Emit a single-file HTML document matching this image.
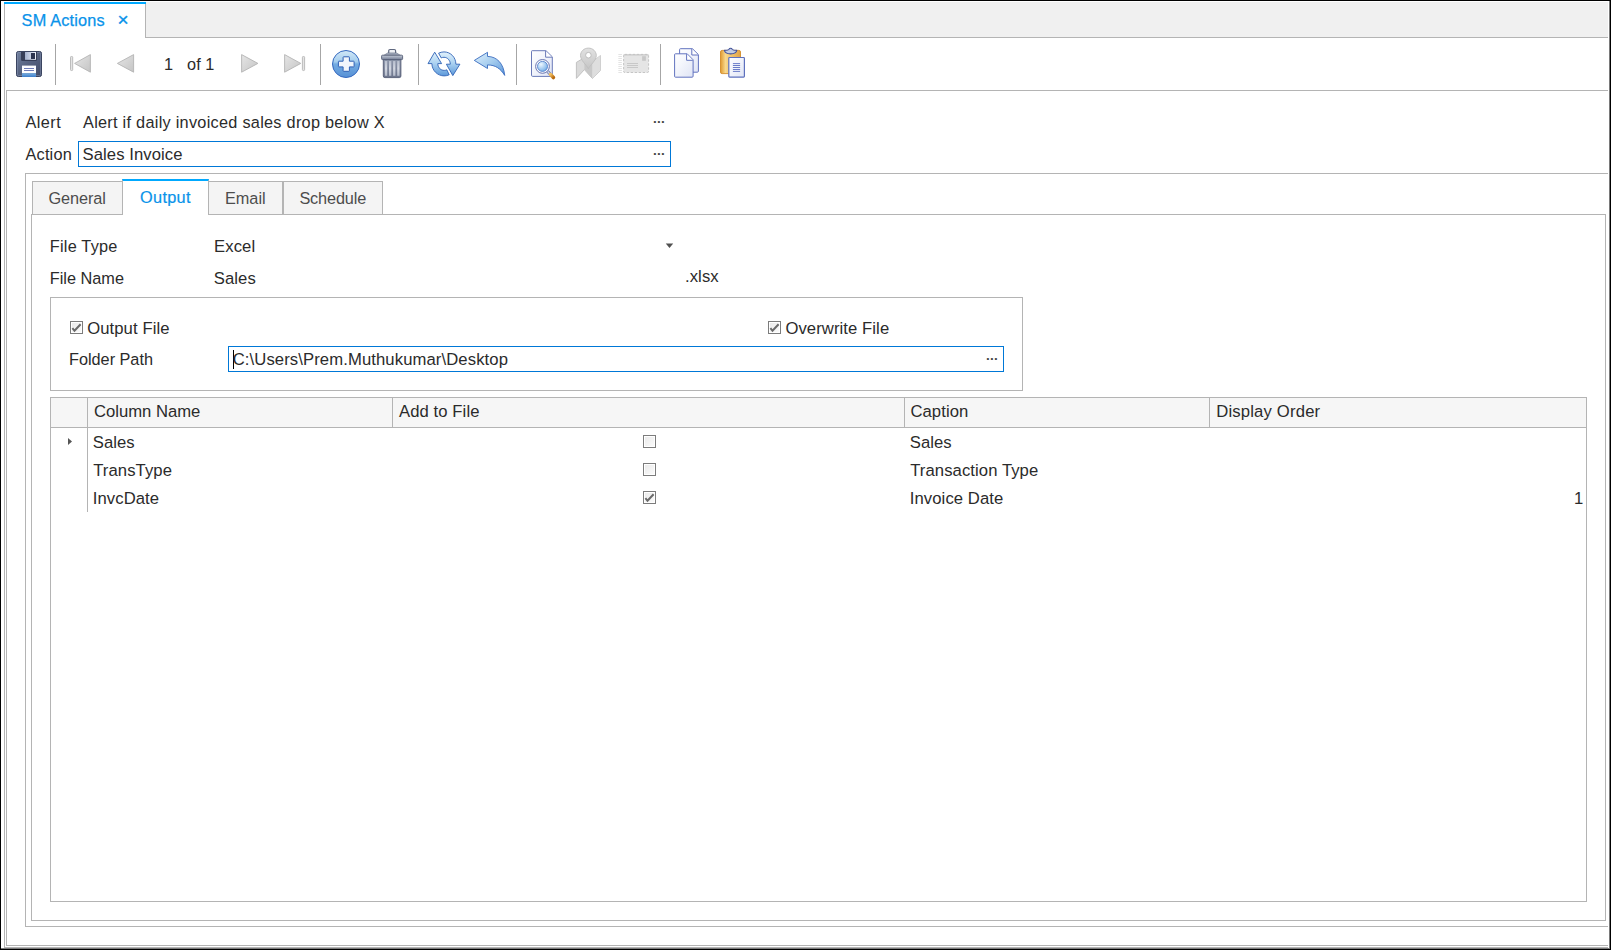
<!DOCTYPE html>
<html lang="en">
<head>
<meta charset="utf-8">
<title>SM Actions</title>
<style>
html,body{margin:0;padding:0;}
body{width:1611px;height:950px;overflow:hidden;background:#fff;position:relative;font-family:"Liberation Sans",sans-serif;font-size:16.67px;color:#2b2b2b;}
.abs{position:absolute;box-sizing:border-box;}
.t{position:absolute;white-space:nowrap;line-height:20px;height:20px;letter-spacing:0.08px;}
.g{border:1px solid #b4b4b4;}
.sep{position:absolute;width:1px;top:44px;height:41px;background:#a6a6a6;}
.ico{position:absolute;overflow:visible;}
.cb{position:absolute;width:13px;height:13px;box-sizing:border-box;border:1px solid #7c7c7c;background:linear-gradient(135deg,#e9e9e9,#fcfcfc);box-shadow:inset 0 0 0 1px #fff;}
.cb svg{position:absolute;left:0;top:0;}
.s{font-size:16.3px;}
</style>
</head>
<body>
<!-- window frame -->
<div class="abs" style="left:0;top:0;width:1611px;height:950px;border:1px solid #000;"></div>
<div class="abs" style="left:1609px;top:1px;width:1px;height:948px;background:#7a7a7a;"></div>
<div class="abs" style="left:1px;top:948px;width:1609px;height:1px;background:#7a7a7a;"></div>

<!-- document tab strip -->
<div class="abs" style="left:4px;top:2px;width:1604px;height:35px;background:#f0f0f0;"></div>
<div class="abs" style="left:145px;top:37px;width:1463px;height:1px;background:#b4b4b4;"></div>
<div class="abs" id="doctab" style="left:4px;top:2px;width:142px;height:36px;background:#fff;border-left:1px solid #b4b4b4;border-right:1px solid #b4b4b4;"></div>
<div class="abs" style="left:4px;top:2px;width:142px;height:2px;background:#00a9ff;"></div>
<div class="t s" id="t_sm" style="left:21.6px;top:10px;color:#0a93ea;letter-spacing:0.19px;-webkit-text-stroke:0.25px #0a93ea;">SM Actions</div>
<div class="t" id="t_x" style="left:117.6px;top:10px;color:#0a93ea;font-size:19px;-webkit-text-stroke:0.35px #0a93ea;">×</div>

<!-- document frame (box A) -->
<div class="abs" style="left:4px;top:37px;width:1px;height:911px;background:#b4b4b4;"></div>
<div class="abs" style="left:4px;top:947px;width:1604px;height:1px;background:#b4b4b4;"></div>

<!-- toolbar -->
<div class="sep" style="left:55px;"></div>
<div class="sep" style="left:320px;"></div>
<div class="sep" style="left:418px;"></div>
<div class="sep" style="left:516px;"></div>
<div class="sep" style="left:660px;"></div>
<div class="t s" id="t_pg1" style="left:164px;top:54px;">1</div>
<div class="t s" id="t_pg2" style="left:187px;top:54px;">of 1</div>

<!-- toolbar icons -->
<svg class="abs" style="left:0;top:0;" width="800" height="90" viewBox="0 0 800 90">
<defs>
<linearGradient id="gSave" x1="0" y1="0" x2="1" y2="1"><stop offset="0" stop-color="#72819f"/><stop offset="0.5" stop-color="#56627f"/><stop offset="1" stop-color="#434c68"/></linearGradient>
<linearGradient id="gMetal" x1="0" y1="0" x2="1" y2="0"><stop offset="0" stop-color="#a3b0cd"/><stop offset="1" stop-color="#eef2fa"/></linearGradient>
<linearGradient id="gBand" x1="0" y1="0" x2="0" y2="1"><stop offset="0" stop-color="#78b0e4"/><stop offset="1" stop-color="#3c7cc8"/></linearGradient>
<linearGradient id="gTri" x1="0" y1="0" x2="1" y2="1"><stop offset="0" stop-color="#e6e6e6"/><stop offset="1" stop-color="#c4c4c4"/></linearGradient>
<linearGradient id="gAdd" x1="0" y1="0" x2="0" y2="1"><stop offset="0" stop-color="#d2e8f7"/><stop offset="0.42" stop-color="#a4cdee"/><stop offset="0.5" stop-color="#74abe1"/><stop offset="1" stop-color="#5690d5"/></linearGradient>
<linearGradient id="gBlue" x1="0" y1="0" x2="0" y2="1"><stop offset="0" stop-color="#e2f2fc"/><stop offset="0.5" stop-color="#a8d0f0"/><stop offset="1" stop-color="#5c98da"/></linearGradient>
<linearGradient id="gBlue2" x1="0" y1="0" x2="1" y2="1"><stop offset="0" stop-color="#dff0fc"/><stop offset="0.5" stop-color="#a4ccee"/><stop offset="1" stop-color="#5a96da"/></linearGradient>
<linearGradient id="gLid" x1="0" y1="0" x2="0" y2="1"><stop offset="0" stop-color="#c4cbd8"/><stop offset="1" stop-color="#757e96"/></linearGradient>
<linearGradient id="gStripe" x1="0" y1="0" x2="0" y2="1"><stop offset="0" stop-color="#b9c0cf"/><stop offset="0.5" stop-color="#d2d7e1"/><stop offset="1" stop-color="#b4bbca"/></linearGradient>
<linearGradient id="gCan" x1="0" y1="0" x2="0" y2="1"><stop offset="0" stop-color="#8e97ab"/><stop offset="1" stop-color="#6c758c"/></linearGradient>
<linearGradient id="gPage" x1="0" y1="0" x2="1" y2="1"><stop offset="0" stop-color="#ffffff"/><stop offset="0.4" stop-color="#f4f6fc"/><stop offset="1" stop-color="#dfe4f5"/></linearGradient>
<radialGradient id="gLens" cx="0.35" cy="0.3" r="0.8"><stop offset="0" stop-color="#eef8ff"/><stop offset="1" stop-color="#6eaae6"/></radialGradient>
<linearGradient id="gGold" x1="0" y1="0" x2="1" y2="1"><stop offset="0" stop-color="#f2c060"/><stop offset="1" stop-color="#b86a10"/></linearGradient>
<linearGradient id="gClipb" x1="0" y1="0" x2="1" y2="0"><stop offset="0" stop-color="#e09a30"/><stop offset="0.25" stop-color="#f8d88c"/><stop offset="1" stop-color="#e2a444"/></linearGradient>
<linearGradient id="gPin" x1="0" y1="0" x2="0" y2="1"><stop offset="0" stop-color="#e2e2e2"/><stop offset="1" stop-color="#c6c6c6"/></linearGradient>
</defs>

<!-- save -->
<g>
<rect x="16.5" y="51.5" width="25" height="25" rx="1.8" fill="url(#gSave)" stroke="#3a4460" stroke-width="1"/>
<rect x="17.5" y="52.5" width="23" height="23" rx="1" fill="none" stroke="#8c9ab8" stroke-opacity="0.45" stroke-width="1"/>
<path d="M21 52 H37 V59.5 Q37 61 35.5 61 H22.5 Q21 61 21 59.5 Z" fill="#363e57"/>
<rect x="25" y="52" width="11" height="7.8" fill="url(#gMetal)"/>
<rect x="31" y="53" width="4" height="6" fill="#2c3450"/>
<rect x="22" y="65.6" width="14" height="7.6" fill="#fdfdff"/>
<rect x="22" y="73.2" width="14" height="3.8" fill="url(#gBand)"/>
<rect x="24" y="68" width="10" height="1" fill="#6f7cb8"/>
<rect x="24" y="70" width="10" height="1" fill="#6f7cb8"/>
</g>

<!-- nav first -->
<rect x="70.5" y="56.5" width="2.2" height="14" rx="0.8" fill="#e4e4e4" stroke="#b6b6b6" stroke-width="0.9"/>
<path d="M74.6 63.4 L90.4 54.6 L90.4 72.2 Z" fill="url(#gTri)" stroke="#b4b4b4" stroke-width="0.9" stroke-linejoin="round"/>
<!-- nav prev -->
<path d="M117.4 63.4 L133.6 54.6 L133.6 72.2 Z" fill="url(#gTri)" stroke="#b4b4b4" stroke-width="0.9" stroke-linejoin="round"/>
<!-- nav next -->
<path d="M257.9 63.4 L241.6 54.6 L241.6 72.2 Z" fill="url(#gTri)" stroke="#b4b4b4" stroke-width="0.9" stroke-linejoin="round"/>
<!-- nav last -->
<path d="M300.8 63.4 L284.6 54.6 L284.6 72.2 Z" fill="url(#gTri)" stroke="#b4b4b4" stroke-width="0.9" stroke-linejoin="round"/>
<rect x="302.4" y="56.5" width="2.2" height="14" rx="0.8" fill="#e4e4e4" stroke="#b6b6b6" stroke-width="0.9"/>

<!-- add -->
<circle cx="346" cy="64" r="13.5" fill="url(#gAdd)" stroke="#3468bf" stroke-width="1"/>
<path d="M343.6 56.8 H348.9 Q349.4 56.8 349.4 57.3 V61.2 H353.6 Q354.1 61.2 354.1 61.7 V66.4 Q354.1 66.9 353.6 66.9 H349.4 V70.8 Q349.4 71.3 348.9 71.3 H343.6 Q343.1 71.3 343.1 70.8 V66.9 H338.9 Q338.4 66.9 338.4 66.4 V61.7 Q338.4 61.2 338.9 61.2 H343.1 V57.3 Q343.1 56.8 343.6 56.8 Z" fill="#f1f5fc" stroke="#2f60b4" stroke-width="1" stroke-linejoin="round"/>

<!-- trash -->
<g>
<rect x="388.7" y="49.5" width="6.9" height="4.6" rx="1.3" fill="#eef0f4" stroke="#5f687f" stroke-width="1.2"/>
<path d="M383.8 55.4 L387.6 52.9 H396.6 L400.4 55.4 Z" fill="#a3abbc" stroke="#6a738a" stroke-width="0.6"/>
<rect x="381.6" y="55.2" width="21" height="4.4" rx="0.9" fill="url(#gLid)" stroke="#525b74" stroke-width="0.9"/>
<path d="M383.3 59.6 H400.9 V76 Q400.9 77.6 399.3 77.6 H384.9 Q383.3 77.6 383.3 76 Z" fill="url(#gCan)" stroke="#525b74" stroke-width="0.9"/>
<g fill="url(#gStripe)"><rect x="384.9" y="61" width="2.3" height="14.8"/><rect x="389" y="61" width="2.3" height="14.8"/><rect x="393.1" y="61" width="2.3" height="14.8"/><rect x="397.2" y="61" width="2.3" height="14.8"/></g>
</g>

<!-- refresh -->
<g stroke="#2f62b6" stroke-width="0.9" stroke-linejoin="round">
<path d="M434.7 52.2 L428 63.6 H431.9 C432 70.5 437.5 75.9 444.2 75.9 C446 75.9 447.7 75.5 449.2 74.8 L446.8 69.8 C446 70.2 445.1 70.4 444.2 70.4 C440.6 70.4 437.8 67.4 437.8 63.6 H441.6 Z" fill="url(#gBlue)"/>
<path d="M452.8 75.6 L459.9 64.2 H455.9 C455.8 57.3 450.6 51.9 444 51.9 C442 51.9 440.2 52.4 438.6 53.2 L441.2 57.9 C442 57.5 443 57.3 444 57.3 C447.5 57.3 450.2 60.3 450.3 64.2 H446.4 Z" fill="url(#gBlue)"/>
</g>

<!-- undo -->
<path d="M474.3 60.4 L487.5 52.3 V56.4 C497 56.6 503.6 63.5 504.7 75.4 C500.5 68.5 495.5 65 487.5 64.9 V68.5 Z" fill="url(#gBlue2)" stroke="#3a6cc0" stroke-width="0.9" stroke-linejoin="round"/>

<!-- search doc -->
<g>
<path d="M532.2 50.7 H546 L552.3 56.8 V75.2 Q552.3 76.4 551.1 76.4 H532.7 Q531.5 76.4 531.5 75.2 V51.4 Q531.5 50.7 532.2 50.7 Z" fill="url(#gPage)" stroke="#6a7ab8" stroke-width="1"/>
<path d="M545.6 51 V57.2 H552" fill="#fff" stroke="#6a7ab8" stroke-width="1"/>
<path d="M547.6 71.4 L552 76" stroke="#6a77a8" stroke-width="3" stroke-linecap="butt"/><path d="M547.6 71.4 L552 76" stroke="#d4d9ea" stroke-width="1.4" stroke-linecap="butt"/>
<path d="M550.6 74.6 L553.4 77.5" stroke="url(#gGold)" stroke-width="3.6" stroke-linecap="round"/>
<circle cx="542.5" cy="66.4" r="6.9" fill="#f6f8fd" stroke="#5c69a8" stroke-width="0.9"/>
<circle cx="542.5" cy="66.4" r="5" fill="url(#gLens)" stroke="#4a78c8" stroke-width="0.8"/>
</g>

<!-- map (disabled) -->
<g>
<path d="M576.4 62.4 L584.4 57.6 L592.4 62 L600.4 55.6 V70.6 L592.4 78.4 L584.4 69.6 L576.4 78.4 Z" fill="#dadada" stroke="#bcbcbc" stroke-width="0.9" stroke-linejoin="round"/>
<path d="M584.4 57.6 L592.4 62 V78.4 L584.4 69.6 Z" fill="#c8c8c8"/>
<path d="M592.4 62 L600.4 55.6 V70.6 L592.4 78.4 Z" fill="#dedede"/>
<path d="M588.4 68.6 C586.4 64.8 580.5 60.4 580.5 55.6 C580.5 51.4 584 48.1 588.4 48.1 C592.8 48.1 596.3 51.4 596.3 55.6 C596.3 60.4 590.4 64.8 588.4 68.6 Z" fill="url(#gPin)" stroke="#bebebe" stroke-width="0.9"/>
<circle cx="588.4" cy="55.2" r="2.8" fill="#fff" stroke="#b8b8b8" stroke-width="0.9"/>
</g>

<!-- mail (disabled) -->
<g>
<g fill="#dedede">
<rect x="618.3" y="54.2" width="3.6" height="0.8"/><rect x="618.3" y="56.2" width="3.6" height="0.8"/><rect x="618.3" y="58.2" width="3.6" height="0.8"/><rect x="618.3" y="60.2" width="3.6" height="0.8"/><rect x="618.3" y="62.2" width="3.6" height="0.8"/><rect x="618.3" y="64.2" width="3.6" height="0.8"/><rect x="618.3" y="66.2" width="3.6" height="0.8"/><rect x="618.3" y="68.2" width="3.6" height="0.8"/><rect x="618.3" y="70.2" width="3.6" height="0.8"/><rect x="618.3" y="72.2" width="3.6" height="0.8"/>
</g>
<rect x="623.6" y="54.4" width="25" height="18.1" rx="1.2" fill="#e5e5e5" stroke="#c0c0c0" stroke-width="0.9" stroke-dasharray="2.4 1.6"/>
<rect x="623.6" y="54.4" width="25" height="1" fill="#c4c4c4"/>
<rect x="642.1" y="56.2" width="3.8" height="4.6" fill="#c8c8c8"/>
<rect x="627" y="63.1" width="11" height="0.9" fill="#c4c4c4"/>
<rect x="627" y="65.1" width="11" height="0.9" fill="#c4c4c4"/>
<rect x="627" y="67.0" width="11" height="0.9" fill="#c4c4c4"/>
</g>

<!-- copy -->
<g stroke="#6273bf" stroke-width="1" stroke-linejoin="round">
<path d="M680.4 48.7 H692.4 L698.4 54.6 V71.2 Q698.4 72.2 697.4 72.2 H680.4 Q679.6 72.2 679.6 71.4 V49.5 Q679.6 48.7 680.4 48.7 Z" fill="url(#gPage)"/>
<path d="M691.8 49 V55 H698" fill="#fff"/>
<path d="M675.4 53.8 H687.2 L693.1 59.8 V76.2 Q693.1 77.2 692.1 77.2 H675.4 Q674.6 77.2 674.6 76.4 V54.6 Q674.6 53.8 675.4 53.8 Z" fill="url(#gPage)"/>
<path d="M686.6 54.1 V60.3 H692.8" fill="#fff"/>
</g>

<!-- paste -->
<g>
<rect x="720.5" y="50.4" width="20" height="23.2" rx="1.6" fill="url(#gClipb)" stroke="#d38c2a" stroke-width="0.9"/>
<path d="M724.4 50.3 C724.8 53.6 727.8 53.9 730.6 53.9 C733.4 53.9 736.4 53.6 736.8 50.3 C734.6 50.3 732.8 50.2 732.2 49.2 C731.6 48 729.6 48 729 49.2 C728.4 50.2 726.6 50.3 724.4 50.3 Z" fill="#c3cde2" stroke="#43539b" stroke-width="1.1" stroke-linejoin="round"/>
<rect x="728.8" y="57.5" width="15.6" height="19.6" rx="0.8" fill="url(#gPage)" stroke="#5d70bd" stroke-width="1.2"/>
<g fill="#6b7dc9"><rect x="732.9" y="63.1" width="7.2" height="1"/><rect x="732.9" y="65.0" width="7.2" height="1"/><rect x="732.9" y="67.0" width="7.2" height="1"/><rect x="732.9" y="69.0" width="7.2" height="1"/><rect x="732.9" y="70.9" width="7.2" height="1"/></g>
</g>
</svg>

<!-- box B -->
<div class="abs" style="left:6px;top:90px;width:1602px;height:856px;border:1px solid #b4b4b4;border-right:none;"></div>

<div class="t s" id="t_alert" style="left:25.5px;top:112px;letter-spacing:0.43px;">Alert</div>
<div class="t s" id="t_alertv" style="left:83px;top:112px;letter-spacing:0.27px;">Alert if daily invoiced sales drop below X</div>
<div class="t" id="t_dots1" style="left:653px;top:109px;font-size:13.5px;font-weight:bold;letter-spacing:0.3px;color:#444;">...</div>
<div class="t s" id="t_action" style="left:25.5px;top:144px;letter-spacing:0.2px;">Action</div>
<div class="abs" id="in_action" style="left:78px;top:141px;width:593px;height:26px;border:1px solid #0078d7;"></div>
<div class="t" id="t_actionv" style="left:82.5px;top:144.5px;">Sales Invoice</div>
<div class="t" id="t_dots2" style="left:653px;top:141px;font-size:13.5px;font-weight:bold;letter-spacing:0.3px;color:#444;">...</div>

<!-- box C -->
<div class="abs" style="left:25px;top:173px;width:1583px;height:754px;border:1px solid #b4b4b4;border-right:none;"></div>
<!-- box D (tab page) -->
<div class="abs" id="boxd" style="left:31px;top:214px;width:1575px;height:707px;border:1px solid #b4b4b4;"></div>

<!-- tabs -->
<div class="abs" id="tab_gen" style="left:32px;top:181px;width:91px;height:34px;background:#f4f4f4;border:1px solid #b4b4b4;"></div>
<div class="abs" id="tab_em" style="left:208px;top:181px;width:75px;height:34px;background:#f4f4f4;border:1px solid #b4b4b4;"></div>
<div class="abs" id="tab_sch" style="left:283px;top:181px;width:100px;height:34px;background:#f4f4f4;border:1px solid #b4b4b4;"></div>
<div class="abs" id="tab_out" style="left:122px;top:179px;width:87px;height:36px;background:#fff;border-left:1px solid #b4b4b4;border-right:1px solid #b4b4b4;border-top:2px solid #00a9ff;"></div>
<div class="t s" id="t_gen" style="left:48.4px;top:188px;color:#4d4d4d;letter-spacing:-0.08px;">General</div>
<div class="t s" id="t_out" style="left:140px;top:187px;color:#0a93ea;letter-spacing:0.33px;-webkit-text-stroke:0.2px #0a93ea;">Output</div>
<div class="t s" id="t_em" style="left:224.9px;top:188px;color:#4d4d4d;letter-spacing:0.02px;">Email</div>
<div class="t s" id="t_sch" style="left:299.4px;top:188px;color:#4d4d4d;letter-spacing:-0.14px;">Schedule</div>

<!-- file type / name -->
<div class="t s" id="t_ft" style="left:49.8px;top:236px;letter-spacing:0.22px;">File Type</div>
<div class="t" id="t_ftv" style="left:214.1px;top:237px;">Excel</div>
<svg class="abs" style="left:665px;top:243px;" width="9" height="6" viewBox="0 0 9 6"><path d="M0.8 0.5 H8.2 L4.5 4.9 Z" fill="#505050"/></svg>
<div class="t s" id="t_fn" style="left:49.8px;top:268px;letter-spacing:0px;">File Name</div>
<div class="t" id="t_fnv" style="left:213.8px;top:269px;">Sales</div>
<div class="t" id="t_xlsx" style="left:685px;top:266.6px;">.xlsx</div>

<!-- group box -->
<div class="abs g" id="grp" style="left:50px;top:297px;width:973px;height:94px;"></div>
<div class="cb" style="left:70px;top:321px;"><svg width="11" height="11" viewBox="0 0 11 11"><path d="M1.4 6.2 L3.5 8.8 L9.6 2.2" fill="none" stroke="#6a6a6a" stroke-width="2"/></svg></div>
<div class="t" id="t_of" style="left:87.2px;top:319px;">Output File</div>
<div class="cb" style="left:768px;top:321px;"><svg width="11" height="11" viewBox="0 0 11 11"><path d="M1.4 6.2 L3.5 8.8 L9.6 2.2" fill="none" stroke="#6a6a6a" stroke-width="2"/></svg></div>
<div class="t" id="t_ow" style="left:785.4px;top:319px;">Overwrite File</div>
<div class="t s" id="t_fp" style="left:69px;top:349px;letter-spacing:-0.02px;">Folder Path</div>
<div class="abs" id="in_fp" style="left:228px;top:346px;width:776px;height:26px;border:1px solid #0078d7;"></div>
<div class="abs" style="left:233px;top:350px;width:1px;height:19px;background:#000;"></div>
<div class="t" id="t_fpv" style="left:232.7px;top:350.4px;letter-spacing:0.1px;">C:\Users\Prem.Muthukumar\Desktop</div>
<div class="t" id="t_dots3" style="left:986px;top:346px;font-size:13.5px;font-weight:bold;letter-spacing:0.3px;color:#444;">...</div>

<!-- grid -->
<div class="abs g" id="grid" style="left:50px;top:397px;width:1537px;height:505px;"></div>
<div class="abs" style="left:51px;top:398px;width:1535px;height:29px;background:#f6f6f6;"></div>
<div class="abs" style="left:51px;top:427px;width:1535px;height:1px;background:#b4b4b4;"></div>
<div class="abs" style="left:87px;top:398px;width:1px;height:114px;background:#b4b4b4;"></div>
<div class="abs" style="left:392px;top:398px;width:1px;height:29px;background:#b4b4b4;"></div>
<div class="abs" style="left:904px;top:398px;width:1px;height:29px;background:#b4b4b4;"></div>
<div class="abs" style="left:1209px;top:398px;width:1px;height:29px;background:#b4b4b4;"></div>
<div class="t" id="h1" style="left:94px;top:402px;letter-spacing:-0.02px;">Column Name</div>
<div class="t" id="h2" style="left:399px;top:402px;">Add to File</div>
<div class="t" id="h3" style="left:910.4px;top:402px;">Caption</div>
<div class="t" id="h4" style="left:1216.2px;top:402px;letter-spacing:0.18px;">Display Order</div>

<svg class="abs" style="left:68px;top:438px;" width="4" height="7" viewBox="0 0 4 7"><path d="M0 0 L4 3.5 L0 7 Z" fill="#555"/></svg>
<div class="t" id="r1a" style="left:92.7px;top:433px;">Sales</div>
<div class="t" id="r2a" style="left:93.2px;top:461px;">TransType</div>
<div class="t" id="r3a" style="left:92.8px;top:489px;">InvcDate</div>
<div class="cb" style="left:643px;top:435px;"></div>
<div class="cb" style="left:643px;top:463px;"></div>
<div class="cb" style="left:643px;top:491px;"><svg width="11" height="11" viewBox="0 0 11 11"><path d="M1.4 6.2 L3.5 8.8 L9.6 2.2" fill="none" stroke="#6a6a6a" stroke-width="2"/></svg></div>
<div class="t" id="r1c" style="left:909.7px;top:433px;">Sales</div>
<div class="t" id="r2c" style="left:910.2px;top:461px;">Transaction Type</div>
<div class="t" id="r3c" style="left:909.8px;top:489px;">Invoice Date</div>
<div class="t" id="r3d" style="left:1574px;top:489px;">1</div>

</body>
</html>
